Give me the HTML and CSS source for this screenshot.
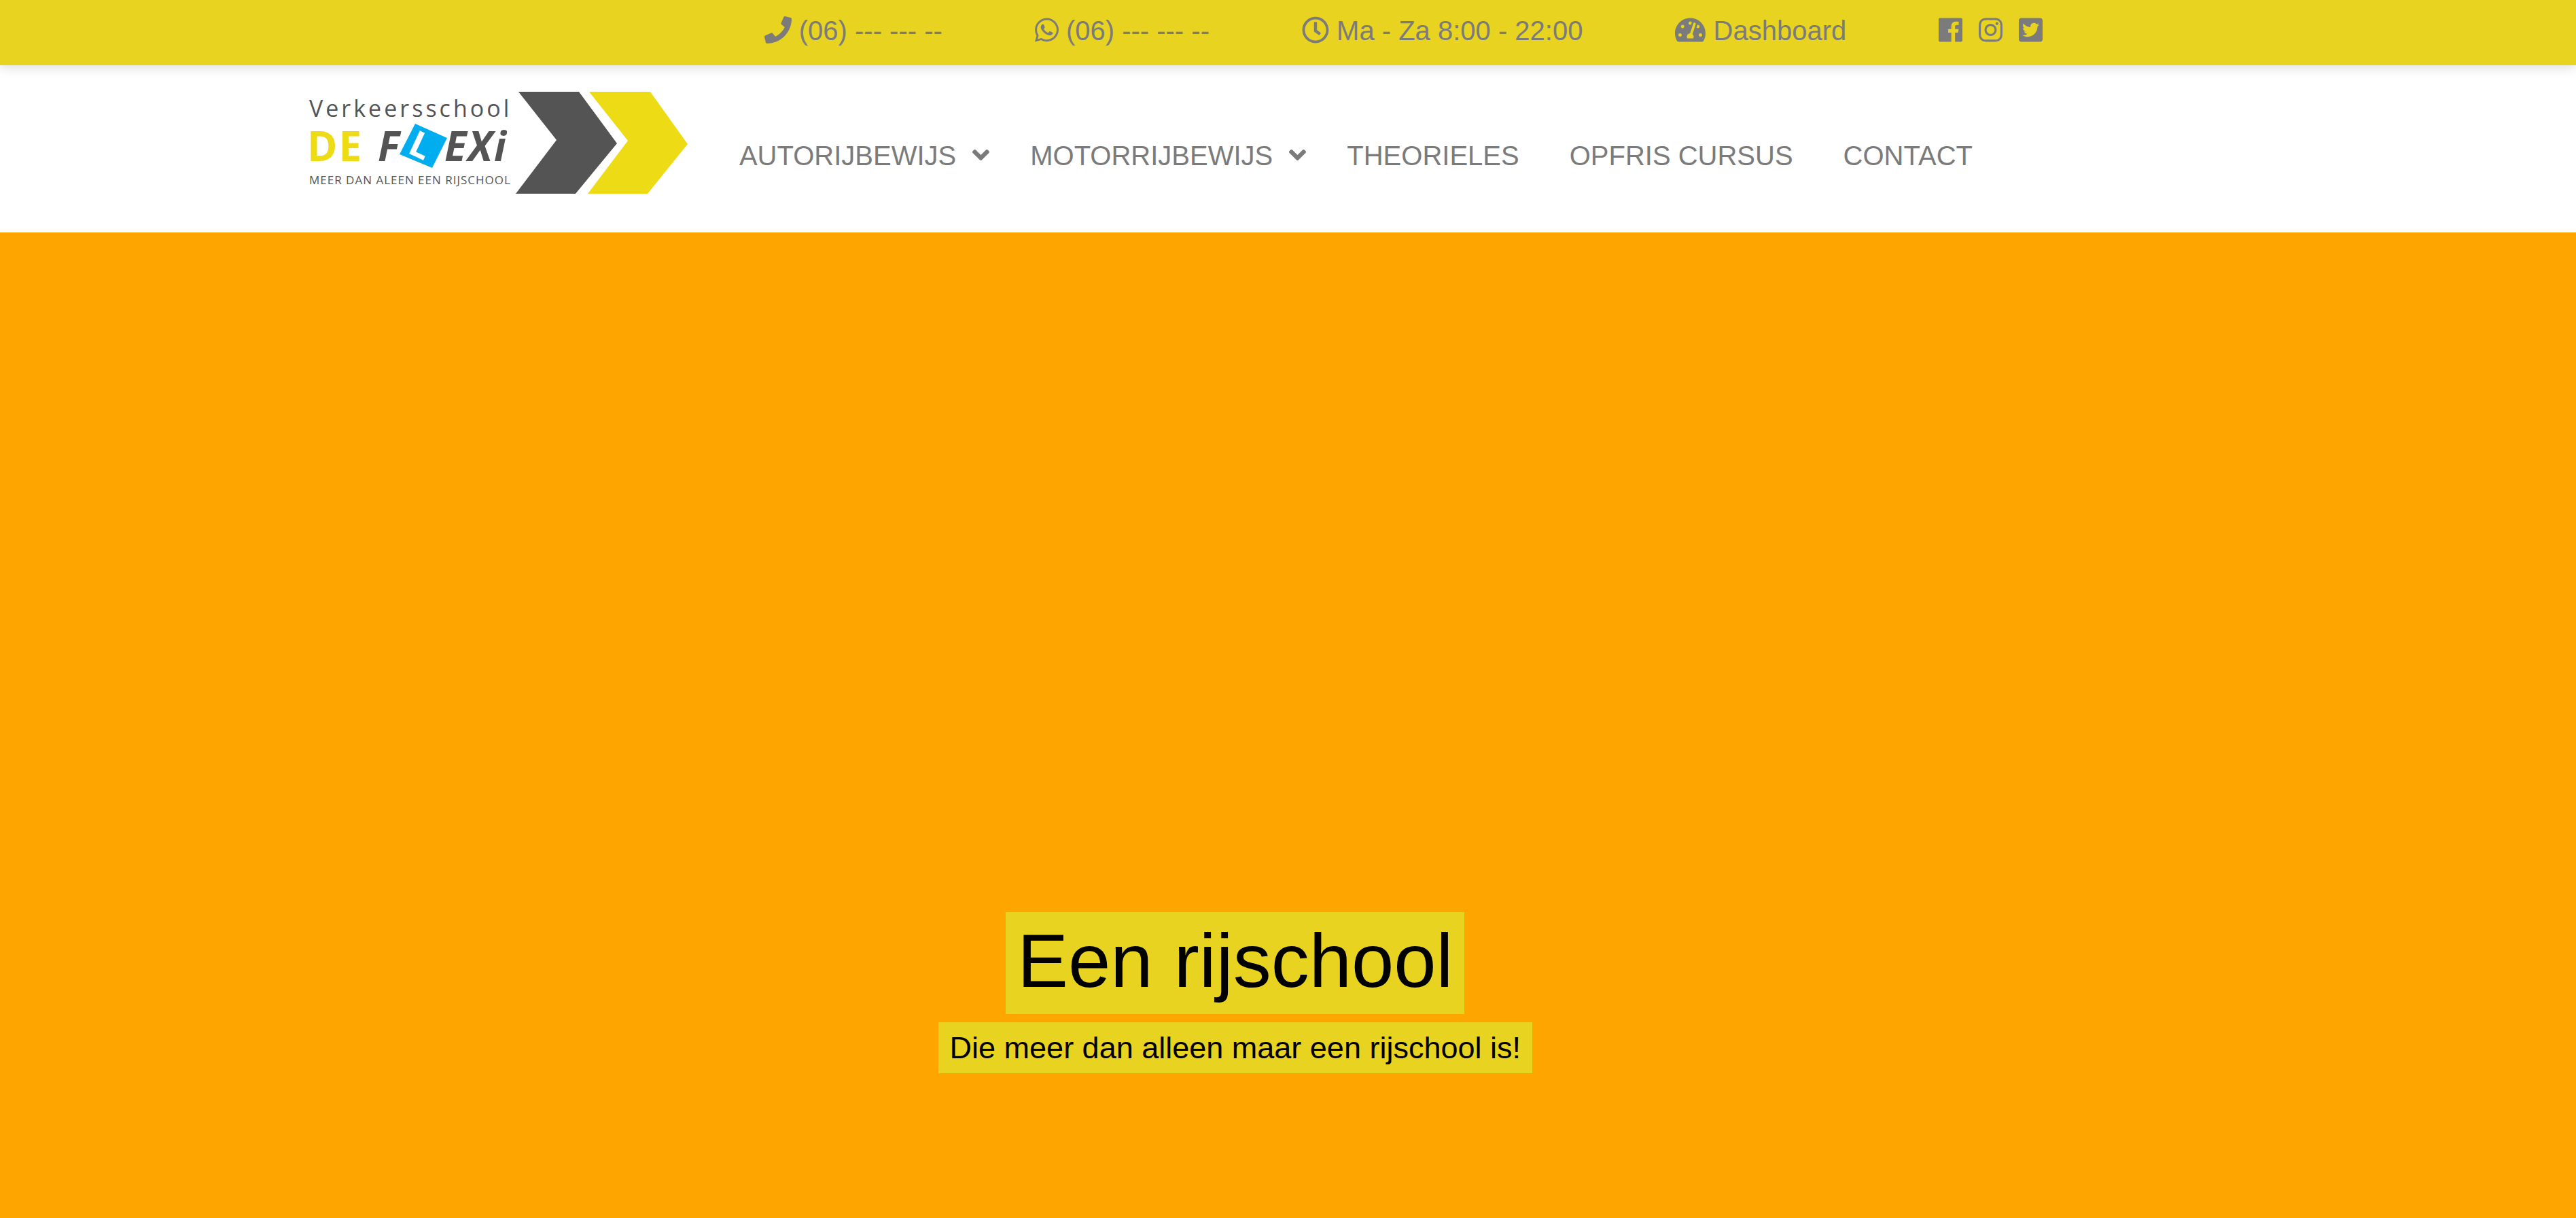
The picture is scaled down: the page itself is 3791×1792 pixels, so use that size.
FILE: index.html
```html
<!DOCTYPE html>
<html lang="nl">
<head>
<meta charset="utf-8">
<meta name="viewport" content="width=device-width, initial-scale=1">
<title>Verkeersschool De Flexi</title>
<link rel="stylesheet" href="styles.css">
</head>
<body>
<div class="topbar">
  <a class="contact" href="#bel"><svg class="icon" viewBox="0 0 512 512" aria-hidden="true"><path d="M493.4 24.6l-104-24c-11.3-2.6-22.9 3.3-27.5 13.9l-48 112c-4.2 9.8-1.4 21.3 6.9 28l60.6 49.6c-36 76.7-98.9 140.5-177.2 177.2l-49.6-60.6c-6.8-8.3-18.2-11.1-28-6.9l-112 48C3.9 366.5-2 378.1.6 389.4l24 104C27.1 504.2 36.7 512 48 512c256.1 0 464-207.5 464-464 0-11.2-7.7-20.9-18.6-23.4z"/></svg> (06) --- --- --</a>
  <a class="contact" href="#whatsapp"><svg class="icon icon-brand" viewBox="0 0 448 512" aria-hidden="true"><path d="M380.9 97.1C339 55.1 283.2 32 223.9 32c-122.4 0-222 99.6-222 222 0 39.1 10.2 77.3 29.6 111L0 480l117.7-30.9c32.4 17.7 68.9 27 106.1 27h.1c122.3 0 224.1-99.6 224.1-222 0-59.3-25.2-115-67.1-157zm-157 341.6c-33.2 0-65.7-8.9-94-25.7l-6.7-4-69.8 18.3L72 359.2l-4.4-7c-18.5-29.4-28.2-63.3-28.2-98.2 0-101.7 82.8-184.5 184.6-184.5 49.3 0 95.6 19.2 130.4 54.1 34.8 34.9 56.2 81.2 56.1 130.5 0 101.8-84.9 184.6-186.6 184.6zm101.2-138.2c-5.5-2.8-32.8-16.2-37.9-18-5.1-1.9-8.8-2.8-12.5 2.8-3.7 5.6-14.3 18-17.6 21.8-3.2 3.7-6.5 4.2-12 1.4-32.6-16.3-54-29.1-75.5-66-5.7-9.8 5.7-9.1 16.3-30.3 1.8-3.7.9-6.9-.5-9.7-1.4-2.8-12.5-30.1-17.1-41.2-4.5-10.8-9.1-9.3-12.5-9.5-3.2-.2-6.9-.2-10.6-.2-3.7 0-9.7 1.4-14.8 6.9-5.1 5.6-19.4 19-19.4 46.3 0 27.3 19.9 53.7 22.6 57.4 2.8 3.7 39.1 59.7 94.8 83.8 35.2 15.2 49 16.5 66.6 13.9 10.7-1.6 32.8-13.4 37.4-26.4 4.6-13 4.6-24.1 3.2-26.4-1.3-2.5-5-3.9-10.5-6.6z"/></svg> (06) --- --- --</a>
  <span class="contact"><svg class="icon" viewBox="0 0 512 512" aria-hidden="true"><path d="M256 8C119 8 8 119 8 256s111 248 248 248 248-111 248-248S393 8 256 8zm0 448c-110.5 0-200-89.5-200-200S145.5 56 256 56s200 89.5 200 200-89.5 200-200 200zm61.8-104.4l-84.9-61.7c-3.1-2.3-4.9-5.9-4.9-9.7V116c0-6.6 5.4-12 12-12h32c6.6 0 12 5.4 12 12v141.7l66.8 48.6c5.4 3.9 6.5 11.4 2.6 16.8L334.6 349c-3.9 5.3-11.4 6.5-16.8 2.6z"/></svg> Ma - Za 8:00 - 22:00</span>
  <a class="contact" href="#dashboard"><svg class="icon icon-wide" viewBox="0 0 576 512" aria-hidden="true"><path d="M288 32C128.94 32 0 160.94 0 320c0 52.8 14.25 102.26 39.06 144.8 5.61 9.62 16.3 15.2 27.44 15.2h443c11.14 0 21.83-5.58 27.44-15.2C561.75 422.26 576 372.8 576 320c0-159.06-128.94-288-288-288zm0 64c14.71 0 26.58 10.13 30.32 23.65-1.11 2.26-2.64 4.23-3.45 6.67l-9.22 27.67c-5.13 3.49-10.97 6.01-17.64 6.01-17.67 0-32-14.33-32-32S270.33 96 288 96zM96 384c-17.67 0-32-14.33-32-32s14.33-32 32-32 32 14.33 32 32-14.33 32-32 32zm48-160c-17.67 0-32-14.33-32-32s14.33-32 32-32 32 14.33 32 32-14.33 32-32 32zm246.77-72.41l-61.33 184C343.13 347.33 352 364.54 352 384c0 11.72-3.38 22.55-8.88 32H232.88c-5.5-9.45-8.88-20.28-8.88-32 0-33.94 26.5-61.43 59.9-63.59l61.34-184.01c4.17-12.56 17.73-19.45 30.36-15.17 12.57 4.19 19.35 17.79 15.17 30.36zm14.66 57.2l15.52-46.55c3.47-1.29 7.13-2.23 11.05-2.23 17.67 0 32 14.33 32 32s-14.33 32-32 32c-11.38-.01-20.89-6.28-26.57-15.22zM480 384c-17.67 0-32-14.33-32-32s14.33-32 32-32 32 14.33 32 32-14.33 32-32 32z"/></svg> Dashboard</a>
  <div class="socials">
    <a href="#facebook" aria-label="Facebook"><svg class="icon icon-brand" viewBox="0 0 448 512" aria-hidden="true"><path d="M448 56.7v398.5c0 13.7-11.1 24.7-24.7 24.7H309.1V306.5h58.2l8.7-67.6h-67v-43.2c0-19.6 5.4-32.9 33.5-32.9h35.8v-60.5c-6.2-.8-27.4-2.7-52.2-2.7-51.6 0-87 31.5-87 89.4v49.9h-58.4v67.6h58.4V480H24.7C11.1 480 0 468.9 0 455.3V56.7C0 43.1 11.1 32 24.7 32h398.5c13.7 0 24.8 11.1 24.8 24.7z"/></svg></a>
    <a href="#instagram" aria-label="Instagram"><svg class="icon icon-brand" viewBox="0 0 448 512" aria-hidden="true"><path d="M224.1 141c-63.6 0-114.9 51.3-114.9 114.9s51.3 114.9 114.9 114.9S339 319.5 339 255.9 287.7 141 224.1 141zm0 189.600c-41.100 0-74.700-33.500-74.700-74.700s33.500-74.700 74.700-74.700 74.700 33.500 74.700 74.700-33.600 74.700-74.700 74.700zm146.400-194.300c0 14.900-12 26.800-26.800 26.800-14.900 0-26.800-12-26.800-26.800s12-26.800 26.800-26.800 26.800 12 26.800 26.800zm76.100 27.200c-1.700-35.900-9.900-67.700-36.200-93.900-26.200-26.200-58-34.400-93.900-36.200-37-2.100-147.900-2.100-184.900 0-35.800 1.700-67.600 9.900-93.900 36.100s-34.400 58-36.200 93.900c-2.100 37-2.100 147.900 0 184.900 1.700 35.900 9.900 67.700 36.200 93.900s58 34.400 93.900 36.200c37 2.100 147.900 2.100 184.900 0 35.900-1.700 67.700-9.900 93.900-36.200 26.200-26.200 34.400-58 36.200-93.900 2.100-37 2.100-147.800 0-184.800zM398.800 388c-7.800 19.600-22.900 34.700-42.600 42.600-29.500 11.700-99.500 9-132.100 9s-102.700 2.600-132.100-9c-19.600-7.800-34.700-22.900-42.600-42.600-11.700-29.500-9-99.500-9-132.100s-2.600-102.700 9-132.100c7.800-19.600 22.900-34.700 42.600-42.600 29.500-11.700 99.500-9 132.100-9s102.700-2.600 132.100 9c19.600 7.800 34.700 22.900 42.600 42.600 11.700 29.500 9 99.500 9 132.100s2.700 102.700-9 132.100z"/></svg></a>
    <a href="#twitter" aria-label="Twitter"><svg class="icon icon-brand" viewBox="0 0 448 512" aria-hidden="true"><path d="M400 32H48C21.500 32 0 53.500 0 80v352c0 26.500 21.500 48 48 48h352c26.500 0 48-21.500 48-48V80c0-26.500-21.500-48-48-48zm-48.900 158.800c.2 2.800.2 5.700.2 8.500 0 86.700-66 186.600-186.600 186.600-37.200 0-71.700-10.800-100.700-29.400 5.300.6 10.400.8 15.800.8 30.700 0 58.900-10.400 81.400-28-28.800-.6-53-19.500-61.300-45.500 10.100 1.500 19.200 1.500 29.600-1.200-30-6.100-52.500-32.500-52.500-64.400v-.8c8.700 4.900 18.900 7.900 29.600 8.300a65.447 65.447 0 0 1-29.200-54.600c0-12.200 3.200-23.400 8.900-33.100 32.300 39.800 80.800 65.800 135.200 68.600-9.300-44.500 24-80.600 64-80.600 18.900 0 35.900 7.900 47.900 20.700 14.800-2.800 29-8.300 41.600-15.800-4.900 15.200-15.200 28-28.800 36.100 13.200-1.400 26-5.100 37.800-10.200-8.900 13.100-20.100 24.700-32.900 34z"/></svg></a>
  </div>
</div>
<header class="header">
  <a class="brand" href="#home" aria-label="Verkeersschool De Flexi">
    <svg class="logo" viewBox="0 0 558 152" aria-hidden="true">
      <text class="logo-school" x="0" y="38">Verkeersschool</text>
      <text class="logo-name logo-yellow" x="-3" y="103">DE</text>
      <text class="logo-name logo-italic" x="101" y="103">F</text>
      <polygon fill="#00aeef" points="156,48 203,69 181,113 133,93"/>
      <text class="logo-plate" transform="translate(143 90) rotate(25)">L</text>
      <text class="logo-name logo-italic" x="199" y="103">EXi</text>
      <text class="logo-tagline" x="0" y="137">MEER DAN ALEEN EEN RIJSCHOOL</text>
      <polygon fill="#545454" points="308,1 397,1 453,77 392,151 304,151 364,72"/>
      <polygon fill="#eddb15" points="412,1 502,1 557,78 498,151 410,151 469,73"/>
    </svg>
  </a>
  <nav class="nav" aria-label="Hoofdmenu">
    <button class="nav-item" type="button" aria-haspopup="true">AUTORIJBEWIJS<svg class="icon icon-angle" viewBox="0 0 320 512" aria-hidden="true"><path d="M143 352.300l-136-136c-9.400-9.400-9.400-24.600 0-33.900l22.600-22.600c9.400-9.400 24.600-9.400 33.900 0l96.400 96.400 96.400-96.400c9.400-9.400 24.600-9.400 33.900 0l22.600 22.600c9.400 9.400 9.400 24.600 0 33.900l-136 136c-9.200 9.400-24.400 9.400-33.800 0z"/></svg></button>
    <button class="nav-item" type="button" aria-haspopup="true">MOTORRIJBEWIJS<svg class="icon icon-angle" viewBox="0 0 320 512" aria-hidden="true"><path d="M143 352.300l-136-136c-9.400-9.400-9.400-24.600 0-33.900l22.600-22.600c9.400-9.400 24.600-9.400 33.900 0l96.400 96.400 96.400-96.400c9.400-9.400 24.600-9.400 33.900 0l22.600 22.600c9.400 9.400 9.400 24.600 0 33.900l-136 136c-9.200 9.400-24.400 9.400-33.800 0z"/></svg></button>
    <a class="nav-item nav-link" href="#theorieles">THEORIELES</a>
    <a class="nav-item nav-link" href="#opfris">OPFRIS CURSUS</a>
    <a class="nav-item nav-link" href="#contact">CONTACT</a>
  </nav>
</header>
<main class="hero">
  <h1 class="hero-title">Een rijschool</h1>
  <p class="hero-text">Die meer dan alleen maar een rijschool is!</p>
</main>
</body>
</html>
```
FILE: styles.css
```css
* {
  box-sizing: border-box;
}

body {
  margin: 0;
  min-height: 100vh;
  display: flex;
  flex-direction: column;
  background: #fff;
  color: #7b7b7b;
  font-family: "Liberation Sans", Arial, sans-serif;
  font-size: 40px;
  line-height: 46px;
}

a {
  color: inherit;
  text-decoration: none;
}

.icon {
  width: 40px;
  height: 40px;
  fill: currentColor;
  vertical-align: -5px;
}

.icon-brand {
  width: 35px;
}

.icon-wide {
  width: 45px;
}

.icon-angle {
  width: 25px;
  margin-left: 24px;
}

.topbar {
  position: relative;
  display: flex;
  justify-content: flex-end;
  gap: 136px;
  padding: 22px 20.7% 28px 0;
  background: #e8d320;
  box-shadow: 0 4px 16px rgba(0, 0, 0, 0.13);
  white-space: nowrap;
}

.socials {
  display: flex;
  gap: 24px;
}

.header {
  display: flex;
  align-items: flex-start;
  gap: 75px;
  padding: 38px 0 56px 12%;
  white-space: nowrap;
}

.brand {
  flex: none;
}

.logo {
  display: block;
  width: 558px;
  height: 152px;
  overflow: visible;
  fill: #545454;
  font-family: "Open Sans", "Noto Sans", sans-serif;
}

.logo-school {
  font-size: 34px;
  letter-spacing: 4px;
}

.logo-name {
  font-size: 60px;
  font-weight: 700;
  letter-spacing: 2px;
}

.logo-yellow {
  fill: #eddb15;
}

.logo-italic {
  font-style: italic;
}

.logo-plate {
  fill: #fff;
  font-size: 52px;
  font-weight: 700;
}

.logo-tagline {
  font-size: 17px;
  letter-spacing: 1px;
}

.nav {
  display: flex;
  gap: 60px;
  padding-top: 72px;
}

.nav-item {
  padding: 0;
  border: 0;
  background: none;
  color: inherit;
  font: inherit;
  cursor: pointer;
}

.nav-link {
  padding-right: 14px;
}

.hero {
  flex: 1;
  display: flex;
  flex-direction: column;
  align-items: center;
  justify-content: flex-end;
  gap: 12px;
  padding: 120px 16.1% 213px 12%;
  background: #ffa500;
  color: #000;
}

.hero-title,
.hero-text {
  margin: 0;
  background: #e8d320;
  font-weight: 400;
}

.hero-title {
  padding: 8px 17px 14px;
  font-size: 112px;
  line-height: 128px;
}

.hero-text {
  padding: 12px 17px 11px;
  font-size: 45px;
  line-height: 52px;
}
```
